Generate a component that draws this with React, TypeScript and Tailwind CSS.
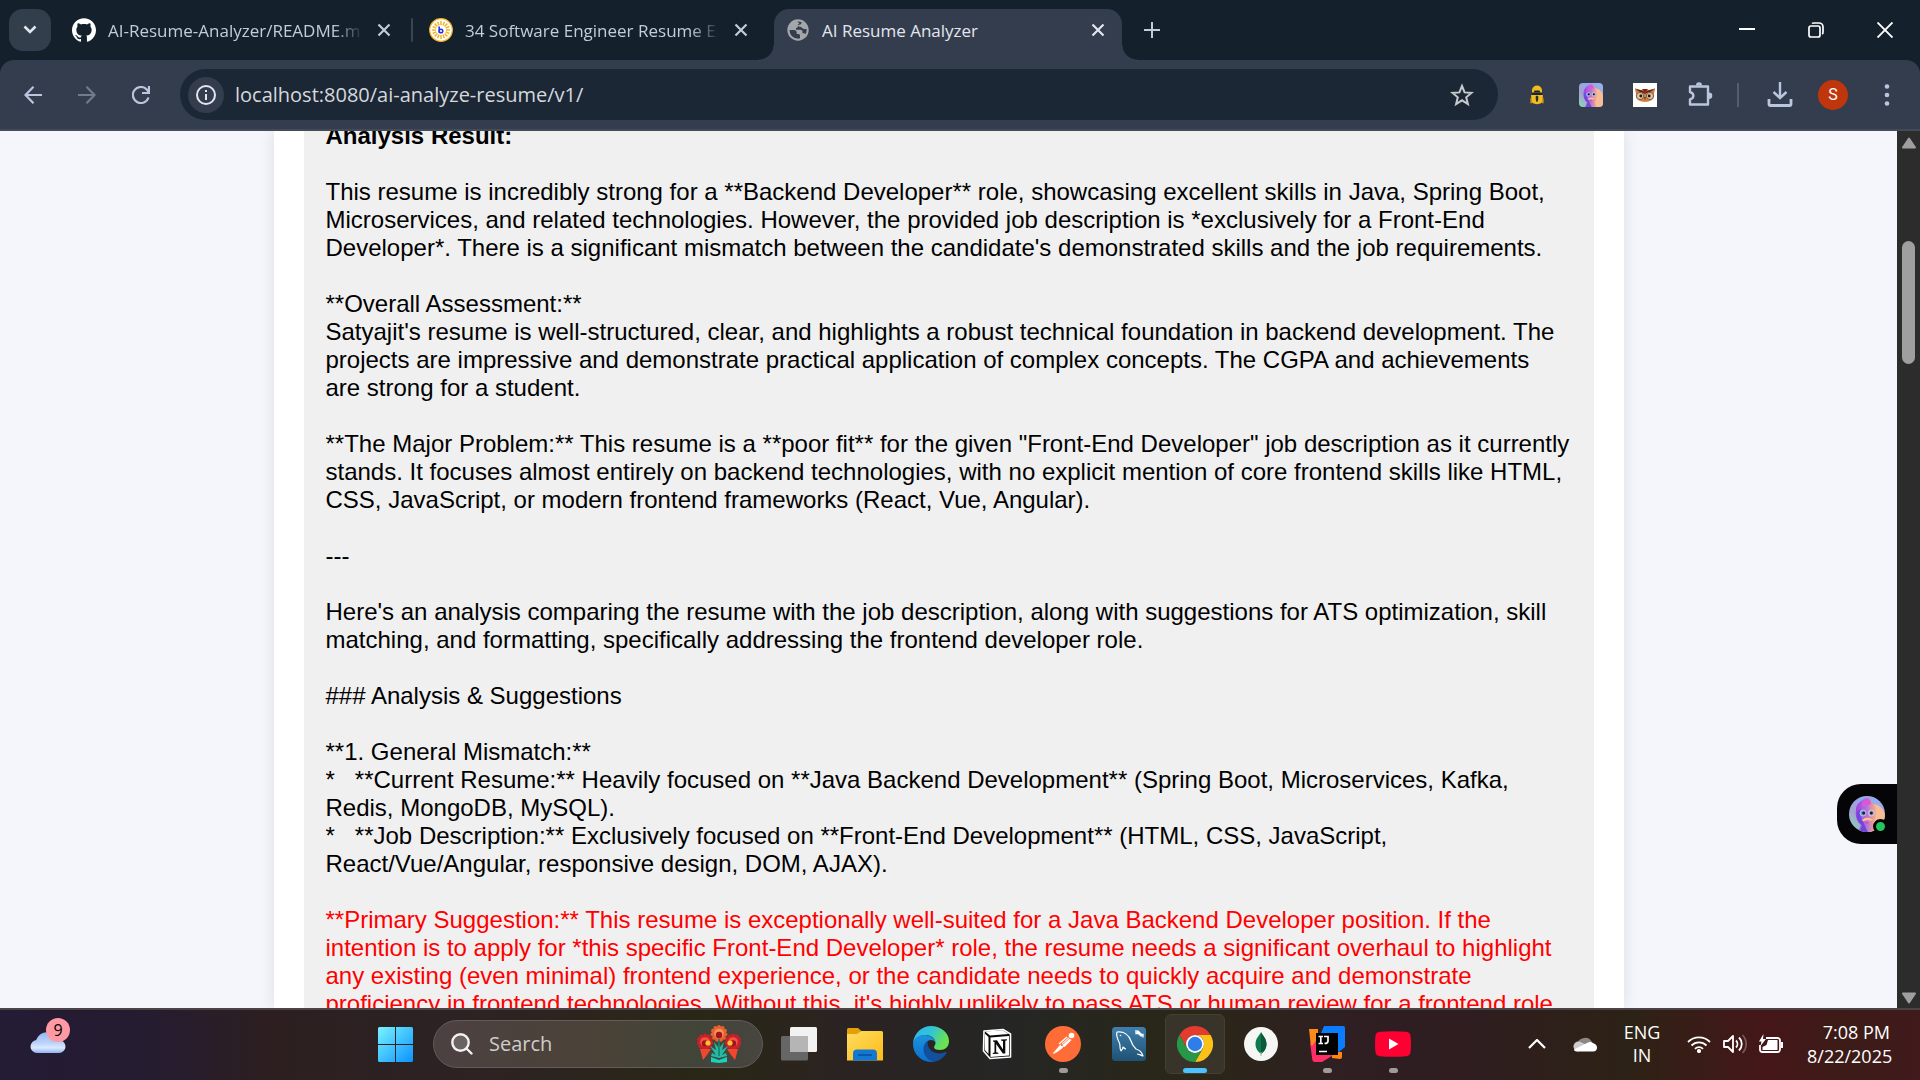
import { Fragment, useId } from "react";
import type { ReactNode } from "react";
import { SiGithub } from "react-icons/si";

type IconProps = { className?: string };

const CloseIcon = ({ className = "" }: IconProps) => (
  <svg viewBox="0 0 14 14" className={`size-[14px] ${className}`} fill="none" stroke="currentColor" strokeWidth="2.2">
    <path d="M1.5 1.5 12.5 12.5M12.5 1.5 1.5 12.5" />
  </svg>
);

const Sunburst = () => (
  <svg viewBox="0 0 24 24" className="size-6 shrink-0">
    <circle cx="12" cy="12" r="11.3" fill="#fff" stroke="#f5b323" strokeWidth="1.2" />
    {Array.from({ length: 16 }, (_, i) => (
      <path key={i} d="M12 3v4" stroke="#f5b323" strokeWidth="1.5" transform={`rotate(${i * 22.5} 12 12)`} />
    ))}
    <path d="M10.2 8.6v6.2" stroke="#2334e8" strokeWidth="1.6" />
    <circle cx="12" cy="13" r="1.8" fill="none" stroke="#2334e8" strokeWidth="1.5" />
  </svg>
);

const Globe = () => (
  <svg viewBox="0 0 22 22" className="size-[22px] shrink-0">
    <circle cx="11" cy="11" r="10" fill="#a3a7aa" />
    <path d="M2 10.500h5.500c2 0 3 1 3 2.500v1.500h2c1.300 0 1.500 1 1.500 2v3C8 21.500 2 18 2 10.500ZM10 2.300c2-.3 3.500.2 4.500.7v1.500c0 1.200-.8 1.500-2 1.500h-1.500v2c0 1-.5 1.300-1.500 1.300H8.500V11h5c1.500 0 2 .8 2 2v1h1.500c1 0 1.600.4 2 1.200 2-3.500 1-8-2-10.500" fill="none" stroke="#333d4d" strokeWidth="0" />
    <path d="M2.500 11h4.500c1.800 0 2.700 1 2.700 2.700v1.200h1.600c1.200 0 1.700.8 1.700 1.800v2.800C7 20.500 2.300 16.500 2.500 11ZM10.500 2.500c1.700-.2 3 .1 4 .6 0 1.900-.6 2.500-2.300 2.700-1 .1-1.300.6-1.300 1.500 0 1.200-.6 1.700-1.900 1.700v1.800h4.200c1.500 0 2.300.8 2.300 2v1.400h1.300c1 0 1.700.5 2 1.300 1.200-2 1-4 .8-5.500h-2.300c-2 0-2-1.500-3.500-2-1.500-.4-3-.2-3-1.700 0-1 .8-1.500 1.800-1.500" fill="#333d4d" />
    <circle cx="11" cy="11" r="9.800" fill="none" stroke="#a3a7aa" strokeWidth="1.800" />
  </svg>
);

const PersonaArt = () => {
  const id = useId();
  return (
    <svg viewBox="0 0 36 36" className="size-full">
      <defs>
        <linearGradient id={`${id}bg`} x1="0" y1="1" x2="1" y2="0">
          <stop offset="0" stopColor="#7fe0ae" />
          <stop offset=".35" stopColor="#a79fd4" />
          <stop offset=".65" stopColor="#8fa9ea" />
          <stop offset="1" stopColor="#9fb2ee" />
        </linearGradient>
        <linearGradient id={`${id}f`} x1="0" y1="0" x2="1" y2="0">
          <stop offset="0" stopColor="#a23fe0" />
          <stop offset=".5" stopColor="#b06fe0" />
          <stop offset="1" stopColor="#ffb07c" />
        </linearGradient>
      </defs>
      <path d="M0 0h36v36H0z" fill={`url(#${id}bg)`} />
      <path d="M22 8c8-1 14 6 14 12v16H18Z" fill="#f8bd97" />
      <path d="M15 3c4-3 8 0 8 4 4 2 5 7 4 12-1 6-3 8-3 11l2 6H9l3-7c-4-3-6-9-5-15C7 9 10 6 15 3Z" fill={`url(#${id}f)`} />
      <path d="M8 16c-1 7 2 11 5 13l-2 7h8c-3-4-3-8-6-12-2-3-2-7-1-11Z" fill="#6a48dc" />
      <path d="M15 4c3-3 7 0 7 4l-8 3c-2-2-1-5 1-7Z" fill="#d65ad8" />
      <circle cx="14" cy="17" r="3" fill="#7e92d8" stroke="#bcd0f4" strokeWidth=".8" />
      <circle cx="22.500" cy="17" r="3" fill="#b39ac0" stroke="#cfd6f0" strokeWidth=".8" />
      <circle cx="14.700" cy="17" r="1.500" fill="#1a1a33" />
      <circle cx="22.300" cy="17" r="1.500" fill="#1a1a33" />
      <path d="M13 24c2-1 3-3 5-2 2-1 4 1 6 1-2 3-4 1-6 1-2 1-4 2-5 0Z" fill="#ffc08c" />
      <path d="M16 26h4l-1 2h-2Z" fill="#e0559a" />
    </svg>
  );
};

const LockBug = () => (
  <svg viewBox="0 0 16 24" className="h-5 w-4">
    <path d="M3 10V6.500a5 5 0 0 1 10 0V10" fill="#f4bd1f" stroke="#f4bd1f" strokeWidth="2" />
    <path d="M5 6.500h6l1 2.500H4Z" fill="#1b2230" />
    <path d="M2 9h12v3H2Z" fill="#1b2230" />
    <path d="M1 12h14v6c0 3-3 5-7 5s-7-2-7-5Z" fill="#f4bd1f" />
    <path d="M0 16h2v6H0zM14 16h2v6h-2z" fill="#c69416" />
    <path d="M7 13.500h2v3.500l-1 3-1-3Z" stroke="#1b2230" fill="#1b2230" />
  </svg>
);

const Owl = () => (
  <svg viewBox="0 0 24 24" className="size-6">
    <path d="M0 0h24v24H0z" fill="#fff" />
    <path d="M2 5c3 2 7 2 10 2s7 0 10-2c0 3-1 4-1 6 1 5-4 8-9 8s-10-3-9-8c0-2-1-3-1-6Z" fill="#d08040" />
    <path d="M3 6c4 1 7 1 9 4 2-3 5-3 9-4-2 3-6 3-9 5C9 9 5 9 3 6Z" fill="#5a2614" />
    <path d="M9 6h6l-3 4Z" fill="#8c1c1c" />
    <circle cx="7" cy="13" r="3.600" fill="#ecc192" stroke="#6f625a" />
    <circle cx="17" cy="13" r="3.600" fill="#ecc192" stroke="#6f625a" />
    <circle cx="7.800" cy="13" r="1.400" fill="#24140e" />
    <circle cx="16.200" cy="13" r="1.400" fill="#24140e" />
    <path d="M11 14h2l-1 3.500Z" fill="#7a3c1e" />
  </svg>
);

type BrowserTab = { title: string; icon: ReactNode };

const idleTabs: BrowserTab[] = [
  { title: "AI-Resume-Analyzer/README.m", icon: <SiGithub className="size-6 shrink-0 text-white" /> },
  { title: "34 Software Engineer Resume Ex", icon: <Sunburst /> },
];

function TabStrip() {
  return (
    <div className="flex h-[60px] items-center bg-[#15202d] pl-[9px] text-[17px] text-[#c3cbdc]">
      <button aria-label="Search tabs" className="grid size-[42px] shrink-0 place-items-center rounded-[14px] bg-[#333e4d] text-[#e2e6ee]">
        <svg viewBox="0 0 14 10" className="h-[10px] w-[14px]" fill="none" stroke="currentColor" strokeWidth="2.600">
          <path d="m1.500 1.500 5.500 5.500 5.500-5.500" />
        </svg>
      </button>
      {idleTabs.map((tab, i) => (
        <Fragment key={tab.title}>
          {i > 0 && <span className="h-6 w-[2px] shrink-0 rounded-full bg-[#3a4554]" />}
          <div className={`flex shrink-0 items-center ${i === 0 ? "w-[360px] pl-[21px]" : "w-[361px] pl-4"}`}>
            {tab.icon}
            <span className="ml-3 w-[252px] overflow-hidden whitespace-nowrap pt-[2px] [mask-image:linear-gradient(to_right,#000_225px,transparent_256px)]">
              {tab.title}
            </span>
            <button aria-label={`Close ${tab.title}`} className="ml-[17px]">
              <CloseIcon />
            </button>
          </div>
        </Fragment>
      ))}
      <div className="flex h-full w-[348px] shrink-0 items-end">
        <div className="relative flex h-[51px] w-full items-center rounded-t-[15px] bg-[#333d4d] pb-[9px] pl-[13px] pr-[17px] text-[#e3e6ee]">
          <span className="absolute -left-[15px] bottom-0 size-[15px] bg-[radial-gradient(circle_at_0_0,transparent_14px,#333d4d_15px)]" />
          <span className="absolute -right-[15px] bottom-0 size-[15px] bg-[radial-gradient(circle_at_100%_0,transparent_14px,#333d4d_15px)]" />
          <Globe />
          <span className="ml-[13px] flex-1 whitespace-nowrap pt-[2px]">AI Resume Analyzer</span>
          <button aria-label="Close AI Resume Analyzer">
            <CloseIcon />
          </button>
        </div>
      </div>
      <button aria-label="New tab" className="ml-[22px]">
        <svg viewBox="0 0 16 16" className="size-4" stroke="currentColor" strokeWidth="2">
          <path d="M8 0v16M0 8h16" />
        </svg>
      </button>
      <div className="ml-auto flex pr-px text-white">
        <button aria-label="Minimize" className="grid h-[60px] w-[69px] place-items-center">
          <svg viewBox="0 0 16 16" className="size-4" stroke="currentColor" strokeWidth="2"><path d="M0 7h16" /></svg>
        </button>
        <button aria-label="Restore" className="grid h-[60px] w-[69px] place-items-center">
          <svg viewBox="0 0 16 16" className="size-4" fill="none" stroke="currentColor" strokeWidth="1.700">
            <rect x="1" y="4" width="11" height="11" rx="2" />
            <path d="M4 1.500C4.500 1 5 1 6 1h5a4 4 0 0 1 4 4v5c0 1 0 1.500-.8 2.200" />
          </svg>
        </button>
        <button aria-label="Close window" className="grid h-[60px] w-[69px] place-items-center">
          <svg viewBox="0 0 16 16" className="size-4" stroke="currentColor" strokeWidth="1.900"><path d="m.5.5 15 15M15.500.5l-15 15" /></svg>
        </button>
      </div>
    </div>
  );
}

function Toolbar() {
  return (
    <div className="bg-[#15202d]">
      <div className="flex h-[71px] items-start rounded-t-[14px] border-b-2 border-[#434b59] bg-[#333d4d] pt-[9px] text-[#b9c6de]">
        <div className="flex h-[51px] shrink-0 items-center pl-6 pr-[30px]">
          <button aria-label="Back">
            <svg viewBox="0 0 18 18" className="size-[18px]" fill="none" stroke="currentColor" strokeWidth="2.200"><path d="M18 9H1.500M9.500.8 1.500 9l8 8.200" /></svg>
          </button>
          <button aria-label="Forward" className="ml-9 text-[#707b8b]">
            <svg viewBox="0 0 18 18" className="size-[18px]" fill="none" stroke="currentColor" strokeWidth="2.200"><path d="M0 9h16.500M8.500.8l8 8.200-8 8.200" /></svg>
          </button>
          <button aria-label="Reload" className="ml-9">
            <svg viewBox="0 0 18 18" className="size-[18px]" fill="none" stroke="currentColor" strokeWidth="2.200">
              <path d="M16.500 11.500A8 8 0 1 1 15 3.800L16.800 6M17 0v7h-7" />
            </svg>
          </button>
        </div>
        <div className="flex h-[51px] flex-1 items-center rounded-full bg-[#1c2735] pl-2 pr-6">
          <button aria-label="View site information" className="grid size-9 shrink-0 place-items-center rounded-full bg-[#333d4d] text-[#e3e6ee]">
            <svg viewBox="0 0 20 20" className="size-5" fill="none" stroke="currentColor" strokeWidth="2">
              <circle cx="10" cy="10" r="9" />
              <path d="M10 9v6M10 5v2" />
            </svg>
          </button>
          <input
            aria-label="Address"
            defaultValue="localhost:8080/ai-analyze-resume/v1/"
            className="ml-[11px] min-w-0 flex-1 bg-transparent text-[20px] text-[#d5d8de] outline-none"
          />
          <button aria-label="Bookmark this tab" className="text-[#c7c9cc]">
            <svg viewBox="0 0 24 24" className="size-6" fill="none" stroke="currentColor" strokeWidth="2">
              <path d="m12 3 2.600 6.400 6.900.5-5.300 4.400 1.700 6.700-5.900-3.700L6.100 21l1.700-6.700L2.500 9.900l6.900-.5Z" />
            </svg>
          </button>
        </div>
        <div className="flex h-[51px] shrink-0 items-center pl-[31px] pr-6">
          <button aria-label="Lock extension"><LockBug /></button>
          <button aria-label="Assistant extension" className="ml-[34px] size-6 overflow-hidden rounded-[4px]"><PersonaArt /></button>
          <button aria-label="Owl extension" className="ml-[30px]"><Owl /></button>
          <button aria-label="Extensions" className="ml-[30px]">
            <svg viewBox="0 0 26 26" className="size-[26px]">
              <path d="M3 4.500h18v18H3v-5.200c4.500-1.500 4.500-5.800 0-7.300Z" fill="none" stroke="currentColor" strokeWidth="2.400" strokeLinejoin="round" />
              <path d="M9 3.500a3 3.300 0 0 1 6 0ZM22 10.500a3.300 3.300 0 0 1 0 6.600Z" fill="currentColor" />
            </svg>
          </button>
          <span className="ml-6 h-6 w-[2px] bg-[#535e6e]" />
          <button aria-label="Downloads" className="ml-7">
            <svg viewBox="0 0 26 26" className="size-[26px]" fill="none" stroke="currentColor">
              <path d="M13 0v14M6.500 10l6.500 6 6.500-6" strokeWidth="2.400" />
              <path d="M2 17v5.500a1 1 0 0 0 1 1h20a1 1 0 0 0 1-1V17" strokeWidth="2.800" />
            </svg>
          </button>
          <button aria-label="Profile" className="ml-[25px] grid size-[30px] place-items-center rounded-full bg-[#bf360c] font-[Roboto] text-base text-white">S</button>
          <button aria-label="Menu" className="ml-[30px]">
            <svg viewBox="0 0 18 26" className="h-[26px] w-[18px]" fill="currentColor"><circle cx="9" cy="4.500" r="2.300" /><circle cx="9" cy="13" r="2.300" /><circle cx="9" cy="21.500" r="2.300" /></svg>
          </button>
        </div>
      </div>
    </div>
  );
}

const analysis = `This resume is incredibly strong for a **Backend Developer** role, showcasing excellent skills in Java, Spring Boot, Microservices, and related technologies. However, the provided job description is *exclusively for a Front-End Developer*. There is a significant mismatch between the candidate's demonstrated skills and the job requirements.

**Overall Assessment:**
Satyajit's resume is well-structured, clear, and highlights a robust technical foundation in backend development. The projects are impressive and demonstrate practical application of complex concepts. The CGPA and achievements are\u00a0strong for a student.

**The Major Problem:** This resume is a **poor fit** for the given "Front-End Developer" job description as it currently stands. It focuses almost entirely on backend technologies, with no explicit mention of core frontend skills like HTML, CSS, JavaScript, or modern frontend frameworks (React, Vue, Angular).

---

Here's an analysis comparing the resume with the job description, along with suggestions for ATS optimization, skill matching, and formatting, specifically addressing the frontend developer role.

### Analysis & Suggestions

**1. General Mismatch:**
*   **Current Resume:** Heavily focused on **Java Backend Development** (Spring Boot, Microservices, Kafka, Redis, MongoDB, MySQL).
*   **Job Description:** Exclusively focused on **Front-End Development** (HTML, CSS, JavaScript, React/Vue/Angular, responsive design, DOM, AJAX).
`;

const suggestion = `**Primary Suggestion:** This resume is exceptionally well-suited for a Java Backend Developer position. If the intention is to apply for *this specific Front-End Developer* role, the resume needs a significant overhaul to highlight any existing (even minimal) frontend experience, or the candidate needs to quickly acquire and demonstrate proficiency in frontend technologies. Without this, it's highly unlikely to pass ATS or human review for a frontend role.`;

function Page() {
  return (
    <div className="flex min-h-0 flex-1">
      <main className="relative flex min-w-0 flex-1 flex-col overflow-hidden bg-[#f4f6fb]">
        <div className="mx-auto flex min-h-0 w-full max-w-[1350px] flex-1 bg-white px-[30px] shadow-[0_0_15px_rgba(0,0,0,0.1)]">
          <section className="flex-1 overflow-hidden bg-[#f0f0f0] px-[22px] text-[24px] leading-[28px] text-black [font-family:'Liberation_Sans',Arial,sans-serif]">
            <h2 className="-mt-[9px] mb-7 font-bold">Analysis Result:</h2>
            <p className="whitespace-pre-wrap">{analysis}</p>
            <p className="mt-7 whitespace-pre-wrap text-[#ff0000]">{suggestion}</p>
          </section>
        </div>
        <button aria-label="Open assistant" className="absolute right-0 bottom-[164px] h-[60px] w-[60px] rounded-l-[24px] bg-[#050507]">
          <span className="absolute top-3 left-3 size-9 overflow-hidden rounded-full"><PersonaArt /></span>
          <span className="absolute top-[35px] left-9 size-[15px] rounded-full border-[3px] border-[#050507] bg-[#22c55e]" />
        </button>
      </main>
      <div className="flex w-[23px] shrink-0 flex-col items-center bg-[#2c2c2c] pt-[6px] pb-[4px]">
        <svg viewBox="0 0 14 12" className="h-3 w-[14px]" fill="#9f9f9f" stroke="#9f9f9f" strokeWidth="2" strokeLinejoin="round"><path d="M7 1.500 13 10.500H1Z" /></svg>
        <div className="mt-[92px] h-[123px] w-[13px] rounded-full bg-[#9f9f9f]" />
        <svg viewBox="0 0 14 12" className="mt-auto h-3 w-[14px]" fill="#9f9f9f" stroke="#9f9f9f" strokeWidth="2" strokeLinejoin="round"><path d="M7 10.500 1 1.500h12Z" /></svg>
      </div>
    </div>
  );
}

const Weather = () => (
  <svg viewBox="0 0 36 24" className="h-6 w-9">
    <defs>
      <linearGradient id="wc" x1="0" y1="0" x2="0" y2="1"><stop offset="0" stopColor="#8fb4f2" /><stop offset="1" stopColor="#dbe8fd" /></linearGradient>
      <linearGradient id="wd" x1="0" y1="0" x2="0" y2="1"><stop offset="0" stopColor="#a9c6f6" /><stop offset=".6" stopColor="#dce9fd" /><stop offset="1" stopColor="#8fb2f0" /></linearGradient>
    </defs>
    <path d="M6 16a11 11 0 0 1 22-5l2 8H8Z" fill="url(#wc)" />
    <path d="M7 23a6.500 6.500 0 0 1 0-13c4 0 6 2 8 3 4-2 6-3 10-3h4a6.500 6.500 0 0 1 0 13Z" fill="url(#wd)" />
  </svg>
);

const Flowers = () => (
  <svg viewBox="0 0 44 38" className="h-[38px] w-11">
    {[{ x: 8, y: 17, c: "#c9202c", k: "#f4543b" }, { x: 36, y: 17, c: "#c9202c", k: "#f4543b" }, { x: 22, y: 8.5, c: "#e9622b", k: "#f6905c" }].map((f) => (
      <g key={f.x}>
        {Array.from({ length: 11 }, (_, i) => (
          <ellipse key={i} cx={f.x} cy={f.y - 5} rx="2.200" ry="3.500" fill={f.c} transform={`rotate(${i * 32.7} ${f.x} ${f.y})`} />
        ))}
        <circle cx={f.x} cy={f.y} r="4.800" fill={f.k} />
        <circle cx={f.x} cy={f.y + 1.5} r="3.200" fill="#a3121f" />
      </g>
    ))}
    <circle cx="11" cy="18" r="2.600" fill="#fbc02d" />
    <circle cx="33" cy="18" r="2.600" fill="#fbc02d" />
    <path d="m3 24 11 0-4 6-4 5ZM41 24l-11 0 4 6 4 5Z" fill="#f0472f" />
    <path d="M22 33 14 31l1-3 4 2-6-9 6 4-2-8 4 5 1-9 1 9 4-5-2 8 6-4-6 9 4-2 1 3Z" fill="#23b9a4" />
    <path d="M14 32v5l8 1 8-1v-5l-8 3Z" fill="#16d3bd" />
    <path d="M22 14v17" stroke="#0b6f5c" strokeWidth="1.200" />
  </svg>
);

const EdgeIcon = () => (
  <svg viewBox="0 0 36 36" className="size-9">
    <defs>
      <linearGradient id="e1" x1="0" y1="0" x2="1" y2=".4"><stop offset="0" stopColor="#2fb4f0" /><stop offset=".5" stopColor="#31c4d8" /><stop offset="1" stopColor="#6be24e" /></linearGradient>
      <linearGradient id="e2" x1="0" y1="0" x2="0" y2="1"><stop offset="0" stopColor="#1c92dc" /><stop offset="1" stopColor="#0b6fd0" /></linearGradient>
    </defs>
    <path d="M0 17C1 7 9 0 18 0c10 0 18 7 18 15 0 6-4 9-9 9-4 0-6-1-6-3 0-1 1.500-2 1.500-4 0-4-4-8-10-8C7 9 2 12 0 17Z" fill="url(#e1)" />
    <path d="M0 18c0-5 5-9 11-9 7 0 11.500 4 11.500 8.500C22 15 20 14 18 14c-4 0-7 4-7 9 0 6 4 11 11 12.500C10 38 0 29 0 18Z" fill="url(#e2)" />
    <path d="M15 15c-3 2-5 5-4.500 9C11 31 17 36 22 35.500c5-1 9-4 11.500-8.500.4-1-.3-1.300-1-1-3 1.500-7 2-10 .8C17 25 13.500 20 15 15Z" fill="#12509e" />
  </svg>
);

const NotionIcon = () => (
  <svg viewBox="0 0 30 32" className="h-8 w-[30px]">
    <path d="M2 3 21 1.500 28.500 6v23L8 30.500 1.500 23Z" fill="#0a0a0a" stroke="#fff" strokeWidth="1.600" strokeLinejoin="round" />
    <path d="M3 3.500 20.500 2.200l6 3.800L8 7.500Z" fill="#fff" />
    <path d="M2.800 5.500 6.500 9v17L2.800 22Z" fill="#fff" />
    <path d="M8.500 9.500 27 8v19.500L8.500 29Z" fill="#fff" />
    <path d="M11 12.500l4-.3 6 9.300v-8.500l-2-.4v-1l6-.4v1l-1.700.6V25.500h-2.500L14.200 16v8.200l2.200.5v1l-5.600.4v-1l1.700-.6V14L11 13.500Z" fill="#0a0a0a" />
  </svg>
);

const PostmanIcon = () => (
  <svg viewBox="0 0 36 36" className="size-9">
    <circle cx="18" cy="18" r="18" fill="#ff6c37" />
    <circle cx="26.500" cy="9.500" r="2.800" fill="#fff" />
    <path d="m23.500 11.500 3 2.500-7 7-3-3Zm-8 7L18 21.500l-5 4-3.500 2-1.500.5.500-1.500Z" fill="#fff" />
    <path d="m14 18 8-7M15 23l9-8" stroke="#fff" strokeWidth="1.300" />
    <path d="m16 20 9-8" stroke="#ff6c37" strokeWidth=".8" />
  </svg>
);

const MySqlIcon = () => (
  <svg viewBox="0 0 34 34" className="size-[34px]">
    <defs><linearGradient id="ms" x1="0" y1="0" x2="0" y2="1"><stop offset="0" stopColor="#3f7fae" /><stop offset="1" stopColor="#1f5274" /></linearGradient></defs>
    <rect width="34" height="34" rx="3.500" fill="url(#ms)" />
    <path d="M9 24c-2-3 0-6-2-9-2-4-3-7-2-10 7-1 12 3 14 9 1 4 3 6 5 8 3 1 6 3 7 7-3-1-4-2-6-2M9 24c1-1 2-2 2-4 1 1 2 2 3 2" fill="none" stroke="#fff" strokeWidth="1.200" strokeLinejoin="round" />
    <circle cx="8.500" cy="8.500" r=".8" fill="#fff" />
    <path d="m25 4 5 5" stroke="#fff" strokeWidth="2.500" />
    <path d="M24 3v3.500h3M31 10.500V7.500h-3" stroke="#fff" strokeWidth="1.300" fill="none" />
  </svg>
);

const ChromeIcon = () => (
  <svg viewBox="0 0 36 36" className="size-9">
    <path d="M2.400 9A18 18 0 0 1 33.600 9H18a9 9 0 0 0-7.800 13.500Z" fill="#e33b2e" />
    <path d="M33.600 9A18 18 0 0 1 18 36l7.800-13.500A9 9 0 0 0 18 9Z" fill="#fbc116" />
    <path d="M2.400 9A18 18 0 0 0 18 36l7.800-13.500a9 9 0 0 1-15.600 0Z" fill="#279847" />
    <circle cx="18" cy="18" r="9" fill="#fff" />
    <circle cx="18" cy="18" r="7.200" fill="#2f7de9" />
  </svg>
);

const MongoIcon = () => (
  <svg viewBox="0 0 34 34" className="size-[34px]">
    <circle cx="17" cy="17" r="17" fill="#f6f6f4" />
    <path d="M17 5c1 3 5.500 6 5.500 12 0 5-3 8-5.500 10-2.500-2-5.500-5-5.500-10C11.500 11 16 8 17 5Z" fill="#0f7a4d" />
    <path d="M17 5c1 3 5.500 6 5.500 12 0 5-3 8-5.500 10Z" fill="#0a5b3c" />
    <path d="M17 25v4" stroke="#a9c2b5" strokeWidth="1.200" />
  </svg>
);

const IdeaIcon = () => (
  <svg viewBox="0 0 36 36" className="size-9">
    <path d="M0 3h9v18H2Z" fill="#ff8a1c" />
    <path d="M3 20 12 8v27.500L6 36c-2 0-2.500-1-2.800-3L1 16Z" fill="#ff2d68" />
    <path d="M15 0h19a2 2 0 0 1 2 2v19l-6 5L10 12Z" fill="#0a7cff" />
    <path d="M23 26h10v5a2 2 0 0 1-2 2l-8-1Z" fill="#ff8413" />
    <path d="M3 25h18l2 5-10 6H5Z" fill="#ff2d68" />
    <path d="M7 7h22v22H7z" fill="#000" />
    <path d="M9.500 10.500H14M11.800 10.500v7M9.500 17.500H14M15 10.500h4V15c0 2-1 2.500-3.500 2.500M10 25.500h8" fill="none" stroke="#fff" strokeWidth="1.700" />
  </svg>
);

const YouTubeIcon = () => (
  <svg viewBox="0 0 36 26" className="h-[26px] w-9">
    <path d="M5 .8C13 0 23 0 31 .8c3 .3 4.300 1.700 4.600 4.500.5 5 .5 10.400 0 15.400-.3 2.800-1.600 4.200-4.600 4.500-8 .8-18 .8-26 0-3-.3-4.300-1.700-4.600-4.500-.5-5-.5-10.400 0-15.400C.7 2.500 2 1.100 5 .8Z" fill="#ff0033" />
    <path d="m14 7.500 9.500 5.500-9.500 5.500Z" fill="#fff" />
  </svg>
);

const TaskViewIcon = () => (
  <svg viewBox="0 0 36 34" className="h-[34px] w-9">
    <rect y="9" width="27" height="24.500" rx="1.500" fill="#666" />
    <rect x="9" width="27" height="25" rx="1.500" fill="#f2f2f2" />
    <path d="M9 9h18v16H9z" fill="#b5b5b5" />
  </svg>
);

const FolderIcon = () => (
  <svg viewBox="0 0 36 34" className="h-[34px] w-9">
    <defs><linearGradient id="fo" x1="0" y1="0" x2="1" y2="1"><stop offset="0" stopColor="#ffdc62" /><stop offset="1" stopColor="#fcbc16" /></linearGradient></defs>
    <path d="M0 2.500A1.500 1.500 0 0 1 1.500 1H11l4 3.500L11 9H0Z" fill="#e3a008" />
    <path d="M0 7h10l4.500-3H34.500A1.500 1.500 0 0 1 36 5.500V33.500H0Z" fill="url(#fo)" />
    <path d="M6 33.500v-7a4 4 0 0 1 4-4h16a4 4 0 0 1 4 4v7Z" fill="#1378d1" />
    <path d="M11 28h14" stroke="#0c4b94" strokeWidth="1.400" />
  </svg>
);

type TaskApp = { name: string; icon: ReactNode; state?: "open" | "active" };

const apps: TaskApp[] = [
  { name: "Task view", icon: <TaskViewIcon /> },
  { name: "File Explorer", icon: <FolderIcon /> },
  { name: "Edge", icon: <EdgeIcon /> },
  { name: "Notion", icon: <NotionIcon /> },
  { name: "Postman", icon: <PostmanIcon />, state: "open" },
  { name: "MySQL Workbench", icon: <MySqlIcon /> },
  { name: "Chrome", icon: <ChromeIcon />, state: "active" },
  { name: "MongoDB Compass", icon: <MongoIcon /> },
  { name: "IntelliJ IDEA", icon: <IdeaIcon />, state: "open" },
  { name: "YouTube", icon: <YouTubeIcon />, state: "open" },
];

function Taskbar() {
  return (
    <footer className="flex h-[72px] shrink-0 items-center border-t-2 border-[#4b4345] bg-[linear-gradient(90deg,#241b35_0%,#251c30_8%,#2d1f20_14%,#2c2122_20%,#2d2323_25%,#2a2716_37%,#2b2322_44%,#252625_52%,#2a2717_62%,#2f1f22_70%,#2f1d20_76%,#2d2216_85%,#451618_92%,#3c1b17_96%,#401a1c_100%)] pb-[2px] text-white">
      <button aria-label="Weather, 9 alerts" className="relative mb-1 ml-[30px]">
        <Weather />
        <span className="absolute -top-3 left-4 grid size-6 place-items-center rounded-full bg-[#ff99a4] text-[16px] text-black">9</span>
      </button>
      <div className="ml-auto flex shrink-0 items-center">
        <button aria-label="Start">
          <svg viewBox="0 0 35 35" className="size-[35px]">
            <defs><linearGradient id="win" gradientUnits="userSpaceOnUse" x1="0" y1="0" x2="35" y2="35"><stop offset="0" stopColor="#79f3ff" /><stop offset="1" stopColor="#0a93ff" /></linearGradient></defs>
            <path d="M1.500 0H17v17H0V1.500A1.500 1.500 0 0 1 1.500 0ZM18 0h15.500A1.500 1.500 0 0 1 35 1.500V17H18ZM0 18h17v17H1.500A1.500 1.500 0 0 1 0 33.500ZM18 18h17v15.500a1.500 1.500 0 0 1-1.500 1.500H18Z" fill="url(#win)" />
          </svg>
        </button>
        <label className="ml-5 flex h-12 w-[330px] items-center rounded-full border border-[#645a5b] bg-[linear-gradient(90deg,#4c4141,#4b4238_50%,#414538_80%,#47453f)] pr-[21px] pl-[17px]">
          <svg viewBox="0 0 22 22" className="size-[22px] shrink-0" fill="none" stroke="#f2f2f2" strokeWidth="2.400" strokeLinecap="round"><circle cx="9.500" cy="9.500" r="8.200" fill="#6b6262" /><path d="m15.500 15.500 5 5" /></svg>
          <input type="search" aria-label="Search" placeholder="Search" className="ml-4 min-w-0 flex-1 bg-transparent text-[20px] outline-none placeholder:text-[#d0cdca]" />
          <Flowers />
        </label>
        <div className="ml-[3px] flex">
          {apps.map((app) => (
            <div key={app.name} className="grid w-[66px] place-items-center">
              <button
                aria-label={app.name}
                className={`relative grid size-[60px] place-items-center rounded-[6px] ${app.state === "active" ? "border border-[#453f31] bg-[#39342a]" : ""}`}
              >
                {app.icon}
                {app.state === "open" && <span className="absolute bottom-[1px] h-[5px] w-[9px] rounded-full bg-[#a09b9b]" />}
                {app.state === "active" && <span className="absolute bottom-0 h-[5px] w-6 rounded-full bg-[#4cc2ff]" />}
              </button>
            </div>
          ))}
        </div>
      </div>
      <div className="ml-[102px] flex shrink-0 items-center pr-[30px]">
        <button aria-label="Show hidden icons">
          <svg viewBox="0 0 18 10" className="h-[10px] w-[18px]" fill="none" stroke="#fff" strokeWidth="2.200"><path d="m1 9 8-8 8 8" /></svg>
        </button>
        <button aria-label="OneDrive" className="ml-[27px]">
          <svg viewBox="0 0 24 16" className="h-4 w-6">
            <path d="M4 10a8 8 0 0 1 15-4l1 4Z" fill="#8d8884" />
            <path d="M5 15.500A5 5 0 1 1 8 6.200L18 11Z" fill="#cfcdcb" />
            <path d="M4 15.500c-2 0-3-1-3-2L15 6.500c2-1 3-.5 5 .5 3 1 4 3 4 4.500a4 4 0 0 1-4 4Z" fill="#fff" />
          </svg>
        </button>
        <button aria-label="Input language" className="ml-[26px] w-[38px] text-center text-[18px] leading-[23px]">ENG<br />IN</button>
        <button aria-label="Network, volume and battery" className="ml-[26px] flex items-center gap-3">
          <svg viewBox="0 0 24 18" className="h-[18px] w-6" fill="none" stroke="#fff" strokeWidth="1.800"><path d="M1 7a15.500 15.500 0 0 1 22 0M4.500 10.500a10.500 10.500 0 0 1 15 0M8 13.800a5.700 5.700 0 0 1 8 0" /><circle cx="12" cy="16" r="1.200" fill="#fff" /></svg>
          <svg viewBox="0 0 24 20" className="h-5 w-6" fill="none" stroke="#fff" strokeWidth="1.800"><path d="M1 7h4l5-5v16l-5-5H1ZM13 6.500a5 5 0 0 1 0 7M16 3.500a9 9 0 0 1 0 13" strokeLinejoin="round" /><path d="M19.500 1a13 13 0 0 1 0 18" stroke="#7a5654" /></svg>
          <svg viewBox="0 0 24 20" className="h-5 w-6"><path d="M7 4h11.500A2.500 2.500 0 0 1 21 6.500v9a2.500 2.500 0 0 1-2.500 2.500h-15A2.500 2.500 0 0 1 1 15.500V11" fill="none" stroke="#fff" strokeWidth="1.800" /><path d="M9 6h9.500v10H3.500v-3l4-2ZM22 8h2v6h-2zM4.500 0 0 7.500h2.500L1.500 12 7 5H4Z" fill="#fff" /></svg>
        </button>
        <button aria-label="Clock" className="ml-6 w-[83px] text-right text-[18px] leading-6 whitespace-nowrap">7:08 PM<br />8/22/2025</button>
      </div>
    </footer>
  );
}

export default function App() {
  return (
    <div className="flex h-screen flex-col overflow-hidden text-[18px] [font-family:'Open_Sans','Noto_Sans',sans-serif]">
      <header className="shrink-0">
        <TabStrip />
        <Toolbar />
      </header>
      <Page />
      <Taskbar />
    </div>
  );
}
